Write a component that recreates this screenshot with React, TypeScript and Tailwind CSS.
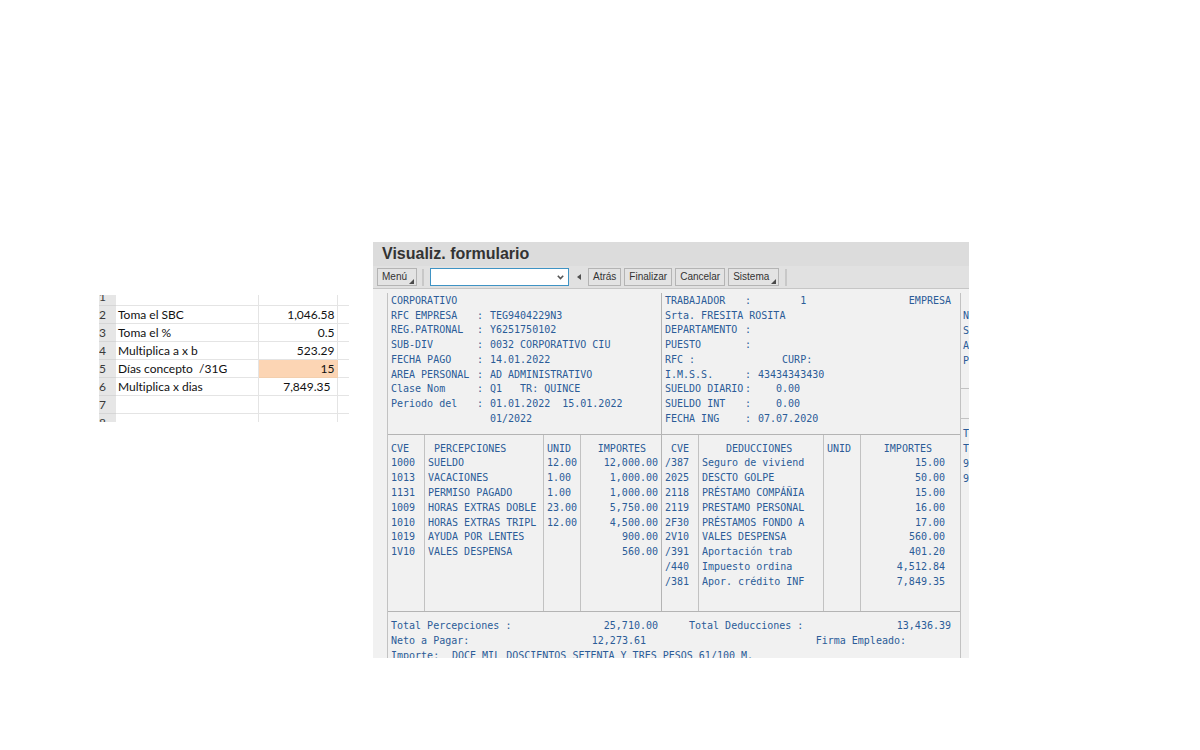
import React from 'react';
import type { ReactNode } from 'react';

type SheetRow = { n: number; label: string; value: string; tone?: 'accent' | 'inset' };

const sheetRows: SheetRow[] = [
  { n: 2, label: 'Toma el SBC', value: '1,046.58' },
  { n: 3, label: 'Toma el %', value: '0.5' },
  { n: 4, label: 'Multiplica a x b', value: '523.29' },
  { n: 5, label: 'Días concepto  /31G', value: '15', tone: 'accent' },
  { n: 6, label: 'Multiplica x dias', value: '7,849.35', tone: 'inset' },
  { n: 7, label: '', value: '' },
];

function Spreadsheet() {
  const head = 'bg-[#e6e6e6] p-0 text-left font-normal text-[#3a3a3a] border-b border-[#d6d6d6]';
  return (
    <section aria-label="Cálculo" className="mt-[53px] w-[250px] shrink-0 overflow-hidden">
      <table className="w-full table-fixed border-collapse font-['Lato','Liberation_Sans',sans-serif] text-[12px] leading-[17px] text-[#111111] [font-variant-ligatures:none]">
        <colgroup>
          <col className="w-[17px]" />
          <col className="w-[142px]" />
          <col className="w-[79px]" />
          <col />
        </colgroup>
        <tbody>
          <tr>
            <th scope="row" className={head}>
              <div className="flex h-[10px] items-end overflow-hidden">1</div>
            </th>
            <td className="border-r border-b border-[#e4e4e4] p-0" />
            <td className="border-r border-b border-[#e4e4e4] p-0" />
            <td className="border-b border-[#e4e4e4] p-0" />
          </tr>
          {sheetRows.map((row) => (
            <tr key={row.n}>
              <th scope="row" className={head}>
                {row.n}
              </th>
              <td className="h-[18px] border-r border-b border-[#e4e4e4] py-0 pr-0 pl-[2px] whitespace-pre">
                {row.label}
              </td>
              <td
                className={
                  row.tone === 'accent'
                    ? 'border-r border-b border-[#f3cfae] bg-[#fcd5b4] py-0 pr-[2px] pl-0 text-right'
                    : row.tone === 'inset'
                      ? 'border-r border-b border-[#e4e4e4] py-0 pr-[6px] pl-0 text-right'
                      : 'border-r border-b border-[#e4e4e4] py-0 pr-[2px] pl-0 text-right'
                }
              >
                {row.value}
              </td>
              <td className="border-b border-[#e4e4e4] p-0" />
            </tr>
          ))}
          <tr>
            <th scope="row" className="bg-[#e6e6e6] p-0 text-left font-normal text-[#3a3a3a]">
              <div className="h-[8px] overflow-hidden">8</div>
            </th>
            <td className="border-r border-[#e4e4e4] p-0" />
            <td className="border-r border-[#e4e4e4] p-0" />
            <td className="p-0" />
          </tr>
        </tbody>
      </table>
    </section>
  );
}

function ToolButton({ children, menu = false }: { children: ReactNode; menu?: boolean }) {
  return (
    <button
      type="button"
      className="flex h-[18px] items-center border border-[#b4b4b4] bg-[#e3e3e3] px-[4px] text-[10px] leading-[12px] text-[#333333]"
    >
      {children}
      {menu && (
        <svg viewBox="0 0 5 5" className="mt-[9px] -mr-[2px] ml-[2px] h-[5px] w-[5px]" aria-hidden="true">
          <path d="M5 0V5H0Z" fill="#4a4a4a" />
        </svg>
      )}
    </button>
  );
}

function Toolbar() {
  return (
    <div className="flex h-[23px] items-center border-b border-[#c6c6c6] bg-[#e1e1e1] pl-[4px]">
      <ToolButton menu>Menú</ToolButton>
      <span className="mr-[6px] ml-[5px] h-[17px] w-[2px] bg-[#c8c8c8]" />
      <div className="flex h-[18px] w-[139px] items-center border border-[#3f93c4] bg-white">
        <input
          type="text"
          aria-label="Comando"
          className="h-full min-w-0 flex-1 bg-transparent px-1 text-[10px] outline-none"
        />
        <button type="button" aria-label="Historial de comandos" className="flex h-full w-4 items-center justify-center">
          <svg viewBox="0 0 7 5" className="h-[5px] w-[7px]" aria-hidden="true">
            <path d="M0.8 0.8L3.5 3.6L6.2 0.8" fill="none" stroke="#555555" strokeWidth="1.6" />
          </svg>
        </button>
      </div>
      <button type="button" aria-label="Contraer" className="flex h-[18px] w-[19px] items-center justify-center">
        <svg viewBox="0 0 4 6" className="h-[6px] w-[4px]" aria-hidden="true">
          <path d="M4 0V6L0 3Z" fill="#505050" />
        </svg>
      </button>
      <div className="flex items-center gap-[3px]">
        <ToolButton>Atrás</ToolButton>
        <ToolButton>Finalizar</ToolButton>
        <ToolButton>Cancelar</ToolButton>
        <ToolButton menu>Sistema</ToolButton>
      </div>
      <span className="ml-[6px] h-[17px] w-[2px] bg-[#c8c8c8]" />
    </div>
  );
}

const company: [string, string, string][] = [
  ['CORPORATIVO', '', ''],
  ['RFC EMPRESA', ':', 'TEG9404229N3'],
  ['REG.PATRONAL', ':', 'Y6251750102'],
  ['SUB-DIV', ':', '0032 CORPORATIVO CIU'],
  ['FECHA PAGO', ':', '14.01.2022'],
  ['AREA PERSONAL', ':', 'AD ADMINISTRATIVO'],
  ['Clase Nom', ':', 'Q1   TR: QUINCE'],
  ['Periodo del', ':', '01.01.2022  15.01.2022'],
  ['', '', '01/2022'],
];

const worker: [string, string, string][] = [
  ['TRABAJADOR', ':', '       1'],
  ['Srta. FRESITA ROSITA', '', ''],
  ['DEPARTAMENTO', ':', ''],
  ['PUESTO', ':', ''],
  ['RFC :', '', '    CURP:'],
  ['I.M.S.S.', ':', '43434343430'],
  ['SUELDO DIARIO', ':', '   0.00'],
  ['SUELDO INT', ':', '   0.00'],
  ['FECHA ING', ':', '07.07.2020'],
];

const lines: string[][] = [
  ['1000', 'SUELDO', '12.00', '12,000.00', '/387', 'Seguro de viviend', '', '15.00'],
  ['1013', 'VACACIONES', '1.00', '1,000.00', '2025', 'DESCTO GOLPE', '', '50.00'],
  ['1131', 'PERMISO PAGADO', '1.00', '1,000.00', '2118', 'PRÉSTAMO COMPÁÑIA', '', '15.00'],
  ['1009', 'HORAS EXTRAS DOBLE', '23.00', '5,750.00', '2119', 'PRESTAMO PERSONAL', '', '16.00'],
  ['1010', 'HORAS EXTRAS TRIPL', '12.00', '4,500.00', '2F30', 'PRÉSTAMOS FONDO A', '', '17.00'],
  ['1019', 'AYUDA POR LENTES', '', '900.00', '2V10', 'VALES DESPENSA', '', '560.00'],
  ['1V10', 'VALES DESPENSA', '', '560.00', '/391', 'Aportación trab', '', '401.20'],
  ['', '', '', '', '/440', 'Impuesto ordina', '', '4,512.84'],
  ['', '', '', '', '/381', 'Apor. crédito INF', '', '7,849.35'],
];

const cellStyles = [
  'border-r border-[#c2c2c2] py-0 pr-0 pl-[3px]',
  'border-r border-[#c2c2c2] py-0 pr-0 pl-[3px]',
  'border-r border-[#c2c2c2] py-0 pr-0 pl-[3px]',
  'border-r border-[#b4b4b4] py-0 pr-[3px] pl-0 text-right',
  'border-r border-[#c2c2c2] py-0 pr-0 pl-[3px]',
  'border-r border-[#c2c2c2] py-0 pr-0 pl-[3px]',
  'border-r border-[#c2c2c2] py-0 pr-0 pl-[3px]',
  'py-0 pr-[15px] pl-0 text-right',
];

const headStyles = [
  'border-r border-[#c2c2c2] py-0 pr-0 pl-[3px] text-left font-normal',
  'border-r border-[#c2c2c2] py-0 pr-0 pl-[9px] text-left font-normal',
  'border-r border-[#c2c2c2] py-0 pr-0 pl-[3px] text-left font-normal',
  'border-r border-[#b4b4b4] py-0 pr-[15px] pl-0 text-right font-normal',
  'border-r border-[#c2c2c2] py-0 pr-0 pl-[9px] text-left font-normal',
  'border-r border-[#c2c2c2] py-0 pr-0 pl-[27px] text-left font-normal',
  'border-r border-[#c2c2c2] py-0 pr-0 pl-[3px] text-left font-normal',
  'py-0 pr-[28px] pl-0 text-right font-normal',
];

const headings = ['CVE', 'PERCEPCIONES', 'UNID', 'IMPORTES', 'CVE', 'DEDUCCIONES', 'UNID', 'IMPORTES'];

function Receipt() {
  return (
    <div className="min-w-0 flex-1 border-x border-[#c2c2c2]">
      <div className="flex border-b border-[#b4b4b4]">
        <div className="w-[274px] shrink-0 border-r border-[#b4b4b4] pb-[8px] pl-[3px]">
          <div className="grid h-[133px] auto-rows-fr">
            {company.map(([label, colon, value], i) => (
              <div key={i} className="grid grid-cols-[86px_13px_1fr] items-end whitespace-pre">
                <span>{label}</span>
                <span>{colon}</span>
                <span>{value}</span>
              </div>
            ))}
          </div>
        </div>
        <div className="flex min-w-0 flex-1 justify-between pr-[9px] pb-[8px] pl-[3px]">
          <div className="grid h-[133px] auto-rows-fr">
            {worker.map(([label, colon, value], i) => (
              <div key={i} className="grid grid-cols-[80px_13px_1fr] items-end whitespace-pre">
                <span>{label}</span>
                <span>{colon}</span>
                <span>{value}</span>
              </div>
            ))}
          </div>
          <span className="leading-[15px]">EMPRESA</span>
        </div>
      </div>

      <table className="h-[176px] w-full table-fixed border-separate border-spacing-0 whitespace-nowrap">
        <colgroup>
          <col className="w-[37px]" />
          <col className="w-[119px]" />
          <col className="w-[37px]" />
          <col className="w-[81px]" />
          <col className="w-[37px]" />
          <col className="w-[125px]" />
          <col className="w-[37px]" />
          <col />
        </colgroup>
        <thead>
          <tr className="h-[21px] align-bottom">
            {headings.map((h, i) => (
              <th key={i} scope="col" className={headStyles[i]}>
                {h}
              </th>
            ))}
          </tr>
        </thead>
        <tbody>
          {lines.map((line, r) => (
            <tr key={r} className={r === lines.length - 1 ? 'h-[36px] align-top' : 'align-top'}>
              {line.map((text, c) => (
                <td key={c} className={cellStyles[c]}>
                  {text}
                </td>
              ))}
            </tr>
          ))}
        </tbody>
      </table>

      <div className="border-t border-[#b4b4b4] pt-[6px] pr-[9px] pl-[3px] leading-[15px]">
        <div className="flex">
          <div className="flex w-[267px] justify-between">
            <span>Total Percepciones :</span>
            <span>25,710.00</span>
          </div>
          <div className="flex flex-1 justify-between pl-[31px]">
            <span>Total Deducciones :</span>
            <span>13,436.39</span>
          </div>
        </div>
        <div className="flex justify-between">
          <div className="flex w-[255px] justify-between">
            <span>Neto a Pagar:</span>
            <span>12,273.61</span>
          </div>
          <span className="pr-[45px]">Firma Empleado:</span>
        </div>
        <div className="flex">
          <span className="w-[61px]">Importe:</span>
          <span>DOCE MIL DOSCIENTOS SETENTA Y TRES PESOS 61/100 M.</span>
        </div>
      </div>
    </div>
  );
}

function NextCopy() {
  return (
    <div className="w-[8px] shrink-0 overflow-hidden pt-[15px] leading-[15px]">
      <div className="h-[81px] border-b border-[#c2c2c2] pl-[2px]">
        <div>N</div>
        <div>S</div>
        <div>A</div>
        <div>P</div>
      </div>
      <div className="h-[30px] border-b border-[#c2c2c2]" />
      <div className="pt-[7px] pl-[2px]">
        <div>T</div>
        <div>T</div>
        <div>9</div>
        <div>9</div>
      </div>
    </div>
  );
}

export default function App() {
  return (
    <main className="flex min-h-screen items-start gap-6 bg-white pt-[242px] pl-[99px]">
      <Spreadsheet />
      <section className="flex max-h-[416px] max-w-[596px] flex-1 flex-col overflow-hidden bg-[#f1f1f1] font-['Liberation_Sans',Arial,sans-serif]">
        <h1 className="h-[24px] shrink-0 bg-[#dcdcdc] pl-[9px] text-[16px] leading-[24px] font-bold text-[#333333]">
          Visualiz. formulario
        </h1>
        <div className="shrink-0">
          <Toolbar />
        </div>
        <div className="flex min-h-0 pt-[4px] pl-[14px] font-['DejaVu_Sans_Mono',monospace] text-[10px] leading-[14px] text-[#2b5c98]">
          <Receipt />
          <NextCopy />
        </div>
      </section>
    </main>
  );
}
